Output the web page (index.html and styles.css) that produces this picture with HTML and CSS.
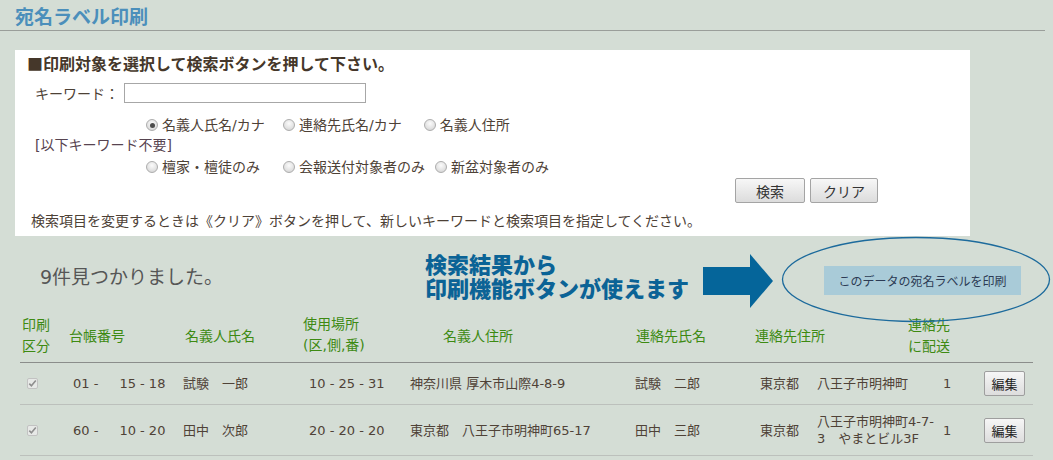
FILE: index.html
```html
<!DOCTYPE html>
<html lang="ja">
<head>
<meta charset="utf-8">
<title>宛名ラベル印刷</title>
<link rel="stylesheet" href="styles.css">
</head>
<body>
<header class="page-head">
  <h1 class="page-title">宛名ラベル印刷</h1>
</header>

<section class="search-panel">
  <h2 class="panel-title">■印刷対象を選択して検索ボタンを押して下さい。</h2>
  <div class="kw-row">
    <span class="kw-label">キーワード：</span>
    <span class="kw-input"></span>
  </div>
  <div class="radio-row radio-row-1">
    <label class="opt opt-a"><span class="radio checked"></span>名義人氏名/カナ</label>
    <label class="opt opt-b"><span class="radio"></span>連絡先氏名/カナ</label>
    <label class="opt"><span class="radio"></span>名義人住所</label>
  </div>
  <div class="bracket-note">[以下キーワード不要]</div>
  <div class="radio-row radio-row-2">
    <label class="opt opt-a"><span class="radio"></span>檀家・檀徒のみ</label>
    <label class="opt opt-b"><span class="radio"></span>会報送付対象者のみ</label>
    <label class="opt"><span class="radio"></span>新盆対象者のみ</label>
  </div>
  <div class="btn-row">
    <button class="btn btn-search" type="button">検索</button>
    <button class="btn btn-clear" type="button">クリア</button>
  </div>
  <p class="help">検索項目を変更するときは《クリア》ボタンを押して、新しいキーワードと検索項目を指定してください。</p>
</section>

<section class="result-bar">
  <div class="count">9件見つかりました。</div>
  <div class="callout">検索結果から<br>印刷機能ボタンが使えます</div>
  <svg class="arrow" width="70" height="54" viewBox="0 0 70 54">
    <rect x="0" y="13" width="48" height="28" fill="#05659a"/>
    <polygon points="47,0 70,27 47,54" fill="#05659a"/>
  </svg>
  <button class="print-btn" type="button">このデータの宛名ラベルを印刷</button>
  <svg class="ring" width="270" height="87" viewBox="0 0 270 87">
    <ellipse cx="135" cy="43.5" rx="133.5" ry="42" fill="none" stroke="#1c6a9c" stroke-width="1.3"/>
  </svg>
</section>

<div class="list">
  <div class="list-head">
    <div class="h c1">印刷<br>区分</div>
    <div class="h c2">台帳番号</div>
    <div class="h c3">名義人氏名</div>
    <div class="h c4">使用場所<br>(区,側,番)</div>
    <div class="h c5">名義人住所</div>
    <div class="h c6">連絡先氏名</div>
    <div class="h c7">連絡先住所</div>
    <div class="h c89">連絡先<br>に配送</div>
  </div>

  <div class="list-row">
    <div class="c1"><span class="check"><svg width="11" height="11" viewBox="0 0 11 11"><path d="M2.3 5.6 L4.4 7.8 L8.8 2.6" fill="none" stroke="#8e8e8e" stroke-width="1.6"/></svg></span></div>
    <div class="c2"><span class="no-a">01 -</span><span class="no-b">15 - 18</span></div>
    <div class="c3">試験　一郎</div>
    <div class="c4">10 - 25 - 31</div>
    <div class="c5">神奈川県 厚木市山際4-8-9</div>
    <div class="c6">試験　二郎</div>
    <div class="c7">東京都</div>
    <div class="c8">八王子市明神町</div>
    <div class="c9">1</div>
    <div class="c10"><button class="edit-btn" type="button">編集</button></div>
  </div>

  <div class="list-row">
    <div class="c1"><span class="check"><svg width="11" height="11" viewBox="0 0 11 11"><path d="M2.3 5.6 L4.4 7.8 L8.8 2.6" fill="none" stroke="#8e8e8e" stroke-width="1.6"/></svg></span></div>
    <div class="c2"><span class="no-a">60 -</span><span class="no-b">10 - 20</span></div>
    <div class="c3">田中　次郎</div>
    <div class="c4">20 - 20 - 20</div>
    <div class="c5">東京都　八王子市明神町65-17</div>
    <div class="c6">田中　三郎</div>
    <div class="c7">東京都</div>
    <div class="c8">八王子市明神町4-7-3　やまとビル3F</div>
    <div class="c9">1</div>
    <div class="c10"><button class="edit-btn" type="button">編集</button></div>
  </div>
</div>
</body>
</html>
```

FILE: styles.css
```css
* { box-sizing: border-box; }

html, body { margin: 0; padding: 0; }

body {
  width: 1053px;
  height: 460px;
  overflow: hidden;
  background: #d4ddd5;
  font-family: "DejaVu Sans", "Noto Sans CJK JP", sans-serif;
  font-size: 14px;
  color: #4d4136;
}

/* ---------- page header ---------- */
.page-head {
  width: 1045px;
  height: 31px;
  border-bottom: 1px solid #9a9e9a;
}

.page-title {
  margin: 0;
  padding: 2px 0 0 15px;
  font-family: "Noto Sans CJK JP", sans-serif;
  font-size: 19px;
  line-height: 28px;
  font-weight: 700;
  color: #4b8fbb;
}

/* ---------- search panel ---------- */
.search-panel {
  margin: 19px 0 0 15px;
  width: 955px;
  height: 186px;
  background: #fff;
  padding: 3px 0 0 12px;
}

.panel-title {
  margin: 0;
  font-family: "Noto Sans CJK JP", sans-serif;
  font-size: 16px;
  line-height: 20px;
  font-weight: 700;
  color: #45372a;
}

.kw-row {
  display: flex;
  align-items: center;
  height: 24px;
  margin-top: 8px;
  padding-left: 8px;
}

.kw-input {
  display: block;
  width: 242px;
  height: 20px;
  margin-left: 5px;
  border: 1px solid #a7a7a7;
  background: #fff;
}

.radio-row {
  display: flex;
  align-items: center;
  height: 20px;
  padding-left: 119px;
}

.radio-row-1 { margin-top: 10px; }
.radio-row-2 { margin-top: 2px; }

.opt {
  display: flex;
  align-items: center;
  white-space: nowrap;
  line-height: 20px;
}

.opt-a { width: 137px; }
.radio-row-1 .opt-b { margin-right: 22px; }
.radio-row-2 .opt-b { margin-right: 10px; }

.radio {
  display: inline-block;
  width: 12px;
  height: 12px;
  margin-right: 4px;
  border-radius: 50%;
  border: 1px solid #adadad;
  background: radial-gradient(circle at 50% 35%, #fbfbfb 0%, #e4e4e4 55%, #cdcdcd 100%);
  position: relative;
}

.radio.checked::after {
  content: "";
  position: absolute;
  left: 2.5px;
  top: 2.5px;
  width: 5px;
  height: 5px;
  border-radius: 50%;
  background: #4c4c4c;
}

.bracket-note {
  height: 20px;
  line-height: 20px;
  padding-left: 8px;
  color: #574450;
}

.btn-row {
  display: flex;
  justify-content: flex-end;
  gap: 5px;
  margin-top: 1px;
  padding-right: 92px;
}

.btn {
  height: 25px;
  padding: 0;
  border: 1px solid #a4a4a4;
  border-radius: 2px;
  background: linear-gradient(#f7f7f7, #dcdcdc);
  font-family: "Noto Sans CJK JP", sans-serif;
  font-size: 14px;
  color: #333;
}

.btn-search { width: 70px; }
.btn-clear { width: 68px; }

.help {
  margin: 8px 0 0 4px;
  line-height: 20px;
  white-space: nowrap;
}

/* ---------- result bar ---------- */
.result-bar {
  position: relative;
  display: flex;
  align-items: flex-start;
  height: 78px;
  padding-left: 40px;
}

.count {
  width: 385px;
  margin-top: 29px;
  font-family: "DejaVu Sans", "Noto Sans CJK JP", sans-serif;
  font-size: 19px;
  line-height: 24px;
  color: #565656;
}

.callout {
  width: 278px;
  margin-top: 15px;
  font-family: "Noto Sans CJK JP", sans-serif;
  font-size: 22px;
  line-height: 24px;
  font-weight: 900;
  color: #0b6396;
  white-space: nowrap;
}

.arrow {
  display: block;
  margin-top: 18px;
  flex: none;
}

.print-btn {
  flex: none;
  width: 197px;
  height: 29px;
  margin: 30px 0 0 51px;
  padding: 0;
  border: 0;
  background: #a9cbd8;
  font-family: "Noto Sans CJK JP", sans-serif;
  font-size: 12px;
  color: #2c3b55;
}

.ring {
  position: absolute;
  left: 781px;
  top: 0;
  overflow: visible;
}

/* ---------- list ---------- */
.list {
  margin-left: 20px;
  width: 1013px;
}

.list-head,
.list-row {
  display: grid;
  grid-template-columns: 45px 115px 120px 105px 225px 125px 57px 128px 30px 63px;
  align-items: center;
}

.list-head {
  padding-bottom: 6px;
  border-bottom: 1px solid #8b8d8b;
  font-family: "Noto Sans CJK JP", sans-serif;
  font-size: 14px;
  line-height: 21px;
  color: #3d8a12;
}

.list-head .h { white-space: nowrap; }
.list-head .c1 { padding-left: 2px; }
.list-head .c2 { padding-left: 4px; }
.list-head .c3 { padding-left: 5px; }
.list-head .c4 { padding-left: 3px; font-family: "DejaVu Sans", "Noto Sans CJK JP", sans-serif; }
.list-head .c5 { padding-left: 38px; }
.list-head .c6 { padding-left: 6px; }
.list-head .c7 { padding-left: 0; overflow: visible; }
.list-head .c89 { grid-column: 8 / 10; text-align: right; padding-right: 20px; }

.list-row {
  padding: 8px 0;
  border-bottom: 1px solid #bcc0bc;
  font-size: 13px;
  line-height: 17px;
  color: #4f4237;
}

.list-row .c1 { padding-left: 7px; }
.list-row .c2 { padding-left: 8px; white-space: nowrap; }
.list-row .c3 { padding-left: 3px; }
.list-row .c4 { padding-left: 9px; white-space: nowrap; }
.list-row .c5 { padding-left: 5px; white-space: nowrap; }
.list-row .c6 { padding-left: 5px; }
.list-row .c7 { padding-left: 5px; }
.list-row .c8 { padding-left: 5px; }
.list-row .c9 { padding-left: 3px; }
.list-row .c10 { padding-left: 14px; }

.no-b { margin-left: 21px; }

.check {
  display: block;
  width: 11px;
  height: 11px;
  border: 1px solid #c2c2c2;
  border-radius: 2px;
  background: #e7e9e7;
  position: relative;
}

.check svg {
  position: absolute;
  left: -1px;
  top: -1px;
}

.edit-btn {
  display: block;
  width: 41px;
  height: 25px;
  padding: 0;
  border: 1px solid #9e9e9e;
  border-radius: 2px;
  background: linear-gradient(#f6f6f6, #dddddd);
  font-family: "Noto Sans CJK JP", sans-serif;
  font-size: 13px;
  color: #222;
}
```
